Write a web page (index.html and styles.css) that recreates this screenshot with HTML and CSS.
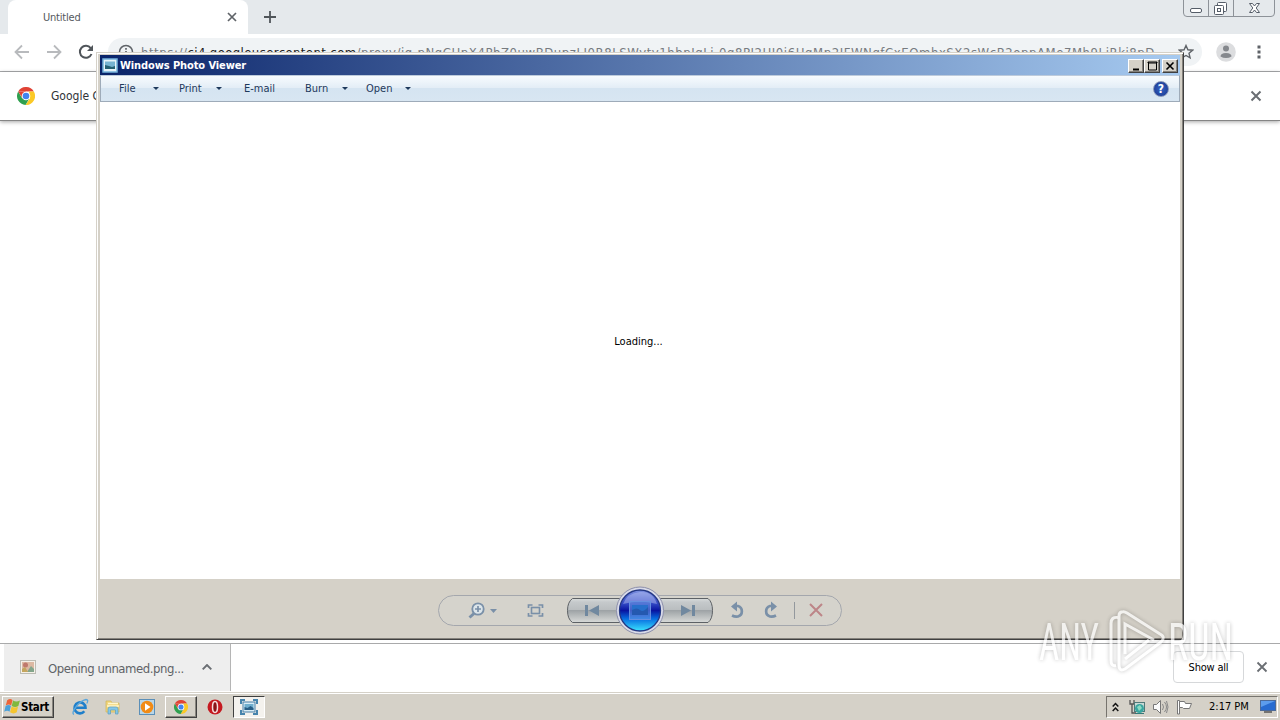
FILE: index.html
```html
<!DOCTYPE html>
<html lang="en">
<head>
    <meta charset="UTF-8">
    <title>Windows Photo Viewer</title>
    <link rel="stylesheet" href="styles.css">
</head>
<body>
<div class="desktop">

    <!-- browser -->
    <div class="browser">
        <div class="tabstrip">
            <div class="tab">
                <span class="tab-title">Untitled</span>
                <svg class="tab-close" width="10" height="10" viewBox="0 0 10 10"><path d="M1 1l8 8M9 1L1 9" stroke="#5f6368" stroke-width="1.7"/></svg>
            </div>
            <svg class="new-tab" width="14" height="14" viewBox="0 0 14 14"><path d="M7 1v12M1 7h12" stroke="#50555a" stroke-width="1.8"/></svg>
            <svg class="win-controls" width="94" height="18" viewBox="0 0 94 18">
                <path d="M.5 0v13q0 3.500 3.500 3.500h84q3.500 0 3.500-3.500V0M25.500 0v16M50.500 0v16" fill="none" stroke="#8d9298"/>
                <rect x="7.500" y="8.500" width="11" height="4" rx="1.500" fill="#fff" stroke="#555d68"/>
                <rect x="34.500" y="2.500" width="9" height="9" rx="1" fill="#fff" stroke="#555d68"/>
                <rect x="31.500" y="5.500" width="9" height="9" rx="1" fill="#fff" stroke="#555d68"/>
                <rect x="34.500" y="8.500" width="3" height="3" fill="#fff" stroke="#555d68"/>
                <path d="M66.500 3.500h3l2 2.500 2-2.500h3l-3.300 4.500 3.300 4.500h-3l-2-2.500-2 2.500h-3L69.800 8z" fill="#fff" stroke="#555d68"/>
            </svg>
        </div>
        <div class="toolbar">
            <svg class="nav-icon" width="16" height="16" viewBox="0 0 16 16"><path d="M15 8H2M8 1.500L1.500 8 8 14.500" fill="none" stroke="#b8babd" stroke-width="1.800"/></svg>
            <svg class="nav-icon" width="16" height="16" viewBox="0 0 16 16"><path d="M1 8h13M8 1.500L14.500 8 8 14.500" fill="none" stroke="#b8babd" stroke-width="1.800"/></svg>
            <svg class="nav-icon" width="16" height="16" viewBox="0 0 16 16"><path d="M13.500 10A6 6 0 1 1 12.700 4.200" fill="none" stroke="#50555a" stroke-width="2"/><path d="M15 1v6H9z" fill="#50555a"/></svg>
            <div class="omnibox">
                <svg class="info" width="16" height="16" viewBox="0 0 16 16"><circle cx="8" cy="8" r="6.500" fill="none" stroke="#5f6368" stroke-width="1.500"/><path d="M8 7v5M8 4v1.800" stroke="#5f6368" stroke-width="1.700"/></svg>
                <span class="url">https://<b>ci4.googleusercontent.com</b>/proxy/jq-pNgCHpX4PbZ0uwBDupzLJ0R8LSWytv1hbpIgLj-0g8PI2HJ0j6HgMp2IFWNgfCxEOmhxSX2sWcB2oppAMe7Mh9LjRkj8pD</span>
                <svg class="star" width="16" height="16" viewBox="0 0 16 16"><path d="M8 1.500l1.900 4.300 4.700.4-3.600 3.100 1.100 4.600L8 11.500l-4.100 2.400L5 9.300 1.400 6.200l4.700-.4z" fill="none" stroke="#5f6368" stroke-width="1.400"/></svg>
            </div>
            <svg class="avatar" width="20" height="20" viewBox="0 0 20 20"><circle cx="10" cy="10" r="9.800" fill="#dcdddf"/><circle cx="10" cy="6.500" r="3" fill="#85888d"/><path d="M4.500 14.500q0-3.500 5.500-3.500t5.500 3.500Q13 16 10 16t-5.500-1.500z" fill="#85888d"/></svg>
            <svg width="4" height="16" viewBox="0 0 4 16"><path d="M.5 1.500h3v3h-3zM.5 6.500h3v3h-3zM.5 11.500h3v3h-3z" fill="#5f6368"/></svg>
        </div>
        <div class="infobar">
            <svg width="18" height="18" viewBox="0 0 18 18">
                <path d="M1.200 4.500A9 9 0 0 1 16.800 4.500H9z" fill="#e04335"/>
                <path d="M16.800 4.500A9 9 0 0 1 8.500 18L13 11.200 12 4.500z" fill="#fbc926"/>
                <path d="M1.200 4.500A9 9 0 0 0 8.500 18L12 12 5 11z" fill="#2fa04f"/>
                <path d="M1.200 4.500L5.500 11.500 9 4.500z" fill="#e04335"/>
                <circle cx="9" cy="9" r="4.300" fill="#fff"/><circle cx="9" cy="9" r="3.300" fill="#4284f0"/>
            </svg>
            <span class="infobar-text">Google C</span>
            <svg class="infobar-close" width="12" height="12" viewBox="0 0 12 12"><path d="M1.500 1.500l9 9M10.500 1.500l-9 9" stroke="#6a6e73" stroke-width="2"/></svg>
        </div>
        <div class="page"></div>
        <div class="shelf">
            <div class="download">
                <svg width="16" height="14" viewBox="0 0 16 14"><rect x=".5" y=".5" width="15" height="13" fill="#f5f0e8" stroke="#bcbcb4"/><rect x="2" y="2" width="12" height="10" fill="#dcb8a2"/><circle cx="5.500" cy="5" r="2.500" fill="#c0796c"/><path d="M7 12l4-6 3 3v3z" fill="#83a58b"/><path d="M2 9l3-2 3 5H2z" fill="#c4a65e"/></svg>
                <span class="file-name">Opening unnamed.png...</span>
                <svg width="10" height="6" viewBox="0 0 10 6"><path d="M.7 5.300L5 1l4.300 4.300" fill="none" stroke="#6a6e73" stroke-width="1.900"/></svg>
            </div>
            <div class="show-all"><span>Show all</span></div>
            <svg width="12" height="12" viewBox="0 0 12 12"><path d="M1.500 1.500l9 9M10.500 1.500l-9 9" stroke="#6a6e73" stroke-width="1.800"/></svg>
        </div>
    </div>

    <!-- taskbar -->
    <div class="taskbar">
        <div class="start">
            <svg width="17" height="17" viewBox="0 0 16 16"><path d="M3 2q3-2 5 0L6.700 7q-2-2-5 0z" fill="#ec6437"/><path d="M8.500 2.300q3 2 6.500 0L13.500 7.500q-3 2-6.200 0z" fill="#80b83e"/><path d="M1.500 7.500q3-2 5 0L5.200 13q-2-2-5 0z" fill="#4aa1d9"/><path d="M7.200 8q3 2 6 0L12 13.500q-3 2-6.300 0z" fill="#f5c52f"/></svg>
            <span>Start</span>
        </div>
        <div class="task task-ie">
            <svg width="18" height="18" viewBox="0 0 18 18"><path d="M5 9.800h9.500A5.500 5.500 0 1 0 13.300 13.300" fill="none" stroke="#1f7fca" stroke-width="2.600"/><path d="M3 16.500C-1 15 8 3 15 1.500q3 0 .8 4" fill="none" stroke="#5aa6dc" stroke-width="1.300"/></svg>
        </div>
        <div class="task">
            <svg width="18" height="18" viewBox="0 0 18 18"><path d="M2 3h5l1 2h7v9H2z" fill="#f2d67b" stroke="#d0b75f" stroke-width=".8"/><path d="M4 5.500h10M3 8h12" stroke="#fff6cc" stroke-width="1.500"/><path d="M4 16v-5q0-2 2-2h6q2 0 2 2v5h-2.500v-4h-5v4z" fill="#84c7e8" stroke="#5b9dbe" stroke-width=".7"/></svg>
        </div>
        <div class="task">
            <svg width="16" height="16" viewBox="0 0 16 16"><rect x=".5" y=".5" width="15" height="15" fill="#b9d6e8" stroke="#5b8fb8"/><circle cx="8" cy="8" r="6.300" fill="#f18b16"/><path d="M6 4.300l5.500 3.700L6 11.700z" fill="#fff"/></svg>
        </div>
        <div class="task raised">
            <svg width="14" height="14" viewBox="0 0 18 18">
                <path d="M1.200 4.500A9 9 0 0 1 16.800 4.500H9z" fill="#e04335"/>
                <path d="M16.800 4.500A9 9 0 0 1 8.500 18L13 11.200 12 4.500z" fill="#fbc926"/>
                <path d="M1.200 4.500A9 9 0 0 0 8.500 18L12 12 5 11z" fill="#2fa04f"/>
                <path d="M1.200 4.500L5.500 11.500 9 4.500z" fill="#e04335"/>
                <circle cx="9" cy="9" r="4.300" fill="#fff"/><circle cx="9" cy="9" r="3.300" fill="#4284f0"/>
            </svg>
        </div>
        <div class="task">
            <svg width="16" height="16" viewBox="0 0 16 16"><circle cx="8" cy="8" r="7.500" fill="#c51920"/><ellipse cx="8" cy="8" rx="2.500" ry="5.500" fill="#8b1217" stroke="#f5dede" stroke-width="1.500"/></svg>
        </div>
        <div class="task pressed">
            <svg width="18" height="16" viewBox="0 0 18 16"><path d="M1 5V1h4M13 1h4v4M17 11v4h-4M5 15H1v-4" fill="none" stroke="#4784ad" stroke-width="2"/><rect x="3" y="3" width="12" height="10" fill="#d8ecf6" stroke="#4b7fa5"/><path d="M4.500 5h9v6h-9z" fill="#70aece"/><path d="M4.500 11V8l3 1 3-2 3 2v2z" fill="#285e86"/></svg>
        </div>
        <div class="tray">
            <svg class="chevrons" width="7" height="10" viewBox="0 0 7 10"><path d="M.7 4.500l2.800-3 2.800 3M.7 9l2.800-3L6.300 9" fill="none" stroke="#111" stroke-width="1.500"/></svg>
            <svg class="net" width="16" height="16" viewBox="0 0 16 16"><path d="M1 1v4h4V1M3 5v9h4" fill="none" stroke="#555" stroke-width="1.300"/><rect x="5.500" y="3.500" width="10" height="9" fill="#c8d9d5" stroke="#517979"/><circle cx="10.500" cy="9.500" r="4.500" fill="#39a6a0"/><path d="M8 8l3-2 2 3-3 3z" fill="#8ddbc3"/><path d="M6 14.500h9" stroke="#367878"/></svg>
            <svg class="volume" width="17" height="16" viewBox="0 0 17 16"><path d="M1.500 5.500h3l4-4v13l-4-4h-3z" fill="#fafafa" stroke="#777"/><path d="M10.500 5q2 3 0 6M12.500 3q4 5 0 10M14.500 2q3 6 0 12" fill="none" stroke="#888"/></svg>
            <svg class="flag" width="17" height="16" viewBox="0 0 17 16"><path d="M1.500 15V1.500h2V15z" fill="#fff" stroke="#777"/><path d="M3.500 2.500h5l1 2h6l-2 5h-6l-1-1h-3z" fill="#fff" stroke="#777"/></svg>
            <span class="clock">2:17 PM</span>
            <svg width="16" height="13" viewBox="0 0 16 13"><rect x=".5" y=".5" width="15" height="10" fill="#286bd0" stroke="#4c6a99"/><path d="M1 1h14L1 7z" fill="#5c9ced"/><path d="M4 12h8" stroke="#555" stroke-width="1.500"/></svg>
        </div>
    </div>

    <!-- photo viewer window -->
    <div class="viewer">
        <div class="titlebar">
            <svg width="16" height="15" viewBox="0 0 16 15"><rect x="1" y="1" width="14" height="13" fill="#e7f3fa" stroke="#75b4dd" stroke-width="1.500"/><rect x="3" y="3.500" width="10" height="7.500" fill="#77b3d2"/><path d="M3 11V7l4 1 3 1 3-1v3z" fill="#245f72"/></svg>
            <span class="title">Windows Photo Viewer</span>
            <div class="caption-btn"><svg width="12" height="10" viewBox="0 0 12 10"><path d="M3 8.500h6" stroke="#000" stroke-width="2"/></svg></div>
            <div class="caption-btn"><svg width="12" height="10" viewBox="0 0 12 10"><path d="M2.500 1v8h8V1M2 1h9v1H2z" fill="none" stroke="#000"/></svg></div>
            <div class="caption-btn close"><svg width="12" height="10" viewBox="0 0 12 10"><path d="M2.500 1.500l7 7M9.500 1.500l-7 7" stroke="#000" stroke-width="1.600"/></svg></div>
        </div>
        <div class="menubar">
            <div class="menu file"><span>File</span><i></i></div>
            <div class="menu print"><span>Print</span><i></i></div>
            <div class="menu email"><span>E-mail</span></div>
            <div class="menu burn"><span>Burn</span><i></i></div>
            <div class="menu open"><span>Open</span><i></i></div>
            <div class="help">?</div>
        </div>
        <div class="canvas"><span>Loading...</span></div>
        <div class="controls">
            <svg width="406" height="50" viewBox="437 586 406 50">
                <defs>
                    <linearGradient id="btn" x2="0" y2="1"><stop offset="0" stop-color="#d9dcdc"/><stop offset=".15" stop-color="#c5c9cb"/><stop offset=".48" stop-color="#b9bdbf"/><stop offset=".5" stop-color="#9ea3a6"/><stop offset="1" stop-color="#d8dad8"/></linearGradient>
                    <linearGradient id="ball" x2="0" y2="1"><stop offset="0" stop-color="#7e91e0"/><stop offset=".35" stop-color="#2c42c0"/><stop offset=".5" stop-color="#0814a0"/><stop offset=".7" stop-color="#076de0"/><stop offset="1" stop-color="#3be4ff"/></linearGradient>
                </defs>
                <rect x="438.500" y="595.500" width="403" height="30" rx="15" fill="#d5d3cc" stroke="#a4a7ad"/>
                <path d="M572.500 598.500H620V622.500H572.500Q567.500 619 567.500 610.500T572.500 598.500z" fill="url(#btn)" stroke="#5d6165"/>
                <path d="M660 598.500H708Q712.500 602 712.500 610.500T708 622.500H660z" fill="url(#btn)" stroke="#5d6165"/>
                <circle cx="640" cy="610.500" r="23.500" fill="#d8dae8" stroke="#8c8faa"/>
                <circle cx="640" cy="610.500" r="20.500" fill="url(#ball)" stroke="#233783" stroke-width="1.300"/>
                <path d="M623 604Q627 593 640 592T657 604Q640 599 623 604z" fill="#c8d2fa" opacity=".4"/>
                <rect x="629.500" y="601.500" width="21" height="18" fill="#6f9ce6" fill-opacity=".55" stroke="#668fe0"/>
                <path d="M632 605h16v10h-16z" fill="#276fcb"/><path d="M632 610q5-3 8 0t8-3v8h-16z" fill="#2459b0"/>
                <g fill="none" stroke="#7a90a8">
                    <circle cx="478" cy="609" r="5.700" fill="#dce5ea" stroke-width="1.800"/>
                    <path d="M475 609h6M478 606v6" stroke-width="1.700"/><path d="M474 613.500l-4.500 4" stroke-width="3"/>
                    <path d="M528.500 608v-3h4M538.500 605h4v3M542.500 613v3h-4M532.500 616h-4v-3" stroke-width="1.700"/>
                    <rect x="531.500" y="607.500" width="8" height="6" stroke-width="1.600"/>
                    <path d="M732 615.500Q735 617 738 616.500A5.500 5.500 0 0 0 738 606h-4" stroke-width="2.700"/>
                    <path d="M776 615.500Q773 617 770 616.500A5.500 5.500 0 0 1 770 606h4" stroke-width="2.700"/>
                </g>
                <path d="M490 609h7l-3.500 4z" fill="#7a90a8"/>
                <path d="M585 605h3v11h-3zM599 605v11l-10-5.500z" fill="#70889f"/>
                <path d="M692 605h3v11h-3zM681 605v11l10-5.500z" fill="#70889f"/>
                <path d="M731 606.500l6-5v10zM777 606.500l-6-5v10z" fill="#7a90a8"/>
                <path d="M794.500 602v17" stroke="#93989d"/>
                <path d="M810 604l12 12M822 604l-12 12" stroke="#bd8588" stroke-width="2"/>
            </svg>
        </div>
    </div>

    <svg class="watermark" width="204" height="70" viewBox="1034 606 204 70">
        <g class="mark">
            <text x="1039" y="660" textLength="60" lengthAdjust="spacingAndGlyphs">ANY</text>
            <text x="1168" y="660" textLength="65" lengthAdjust="spacingAndGlyphs">RUN</text>
            <path d="M1118 617.500q-7-1-7 6v37q0 6 5 5M1122 612q-3 0-3 4v49q0 7 6 4l36-27q5-5-1-8l-33-21q-3-2-5-1zM1125 654v-30l29 16M1125 659l24-19"/>
        </g>
    </svg>
</div>
</body>
</html>
```
FILE: styles.css
```css
body {
    margin: 0;
    overflow: hidden;
    font-family: "DejaVu Sans Condensed", "DejaVu Sans", sans-serif;
    font-stretch: condensed;
    font-size: 11px;
    color: #000;
}

svg {
    display: block;
    flex: none;
}

span {
    white-space: nowrap;
}

.desktop {
    position: relative;
    display: flex;
    flex-direction: column;
    width: 1280px;
    height: 720px;
    overflow: hidden;
}

/* browser */

.browser {
    flex: 1;
    display: flex;
    flex-direction: column;
    background: #fff;
}

.tabstrip {
    display: flex;
    align-items: center;
    height: 34px;
    background: #e5e9ec;
    padding-left: 8px;
}

.tab {
    display: flex;
    align-items: center;
    justify-content: space-between;
    box-sizing: border-box;
    width: 240px;
    height: 34px;
    padding: 0 11px 0 35px;
    border-radius: 8px 8px 0 0;
    background: #fff;
}

.tab-title {
    color: #54585d;
    letter-spacing: -0.2px;
}

.new-tab {
    margin-left: 15px;
}

.win-controls {
    margin: 0 3px 0 auto;
    align-self: flex-start;
}

.toolbar {
    display: flex;
    align-items: center;
    box-sizing: border-box;
    height: 38px;
    padding: 0 19px 1px 14px;
    border-bottom: 1px solid #aaacae;
}

.nav-icon {
    margin-right: 16px;
}

.omnibox {
    display: flex;
    align-items: center;
    box-sizing: border-box;
    width: 1094px;
    height: 28px;
    margin-left: -2px;
    padding: 0 8px 0 10px;
    border-radius: 14px;
    background: #f0f3f5;
}

.url {
    margin-left: 7px;
    width: 1014px;
    font-size: 13px;
    letter-spacing: 0.56px;
    color: #777b80;
    overflow: hidden;
}

.url b {
    font-weight: normal;
    letter-spacing: 0.4px;
    color: #222;
}

.star {
    margin-left: auto;
}

.avatar {
    margin: 0 auto 0 14px;
}

.infobar {
    display: flex;
    align-items: center;
    height: 48px;
    padding: 0 18px 0 17px;
    border-bottom: 1px solid #858585;
    box-shadow: 0 1px 4px rgba(0, 0, 0, 0.35);
}

.infobar-text {
    margin-left: 16px;
    font-size: 12px;
    color: #303438;
}

.infobar-close {
    margin-left: auto;
}

.page {
    flex: 1;
}

.shelf {
    display: flex;
    align-items: center;
    box-sizing: border-box;
    height: 49px;
    padding: 0 12px 2px 4px;
    border-top: 1px solid #a9aaab;
}

.download {
    display: flex;
    align-items: center;
    box-sizing: border-box;
    width: 227px;
    height: 47px;
    padding: 0 18px 0 16px;
    border-right: 1px solid #b5b5b5;
    background: #eee;
}

.file-name {
    flex: 1;
    margin-left: 12px;
    padding-top: 3px;
    font-size: 13px;
    letter-spacing: -0.45px;
    color: #606367;
}

.show-all {
    display: flex;
    align-items: center;
    justify-content: center;
    box-sizing: border-box;
    width: 71px;
    height: 32px;
    margin: 0 12px 0 auto;
    border: 1px solid #d6d8da;
    border-radius: 4px;
    letter-spacing: -0.2px;
}

/* taskbar */

.taskbar {
    display: flex;
    align-items: center;
    box-sizing: border-box;
    height: 28px;
    padding: 0 2px;
    border-top: 1px solid #d5d1c8;
    box-shadow: inset 0 1px #fff;
    background: #d5d1c8;
}

.start {
    display: flex;
    align-items: center;
    box-sizing: border-box;
    width: 52px;
    height: 22px;
    padding-left: 1px;
    border: 1px solid;
    border-color: #fff #404040 #404040 #fff;
    box-shadow: inset -1px -1px #89867f;
    font-size: 11.5px;
    font-weight: bold;
    margin-right: 10px;
}

.start span {
    letter-spacing: -0.3px;
}

.task {
    display: flex;
    align-items: center;
    justify-content: center;
    box-sizing: border-box;
    width: 32px;
    height: 22px;
    margin-right: 2px;
}

.task-ie {
    margin-right: 1px;
}

.raised {
    border: 1px solid;
    border-color: #fff #404040 #404040 #fff;
    box-shadow: inset -1px -1px #89867f;
}

.pressed {
    border: 1px solid;
    border-color: #404040 #fff #fff #404040;
    background: #f4f2ee;
}

.tray {
    display: flex;
    align-items: center;
    box-sizing: border-box;
    width: 172px;
    height: 22px;
    margin-left: auto;
    padding: 0 1px 0 5px;
    border: 1px solid;
    border-color: #77746e #fff #fff #77746e;
}

.net {
    margin-left: 10px;
}

.volume {
    margin-left: 7px;
}

.flag {
    margin-left: 7px;
}

.clock {
    margin: 0 auto 0 16px;
}

/* photo viewer */

.viewer {
    position: absolute;
    left: 96px;
    top: 52px;
    display: flex;
    flex-direction: column;
    box-sizing: border-box;
    width: 1088px;
    height: 588px;
    padding: 2px;
    border: 1px solid;
    border-color: #d5d1c8 #404040 #404040 #d5d1c8;
    box-shadow: inset 1px 1px #fff, inset -1px -1px #85827c;
    background: #d5d1c8;
}

.titlebar {
    display: flex;
    align-items: center;
    box-sizing: border-box;
    height: 20px;
    margin: 0 1px;
    padding: 1px 2px 0;
    background: linear-gradient(to right, #0a246a, #a6caf0);
    color: #fff;
    font-weight: bold;
}

.title {
    margin: 0 auto 0 2px;
    letter-spacing: -0.1px;
}

.caption-btn {
    box-sizing: border-box;
    width: 16px;
    height: 14px;
    padding: 1px;
    border: 1px solid;
    border-color: #fff #404040 #404040 #fff;
    box-shadow: inset -1px -1px #85827c;
    background: #d5d1c8;
}

.close {
    margin-left: 2px;
}

.menubar {
    display: flex;
    align-items: center;
    box-sizing: border-box;
    height: 27px;
    margin: 0 1px;
    padding: 0 10px 0 18px;
    border: 1px solid;
    border-color: #bdcbdc #9eabb9 #9eabb9;
    background: linear-gradient(#f7fbfe, #e3edf6 48%, #d5e4f1 50%, #d8e6f2);
    color: #1e395b;
}

.menu {
    display: flex;
    align-items: center;
    justify-content: space-between;
}

.menu i {
    border: 3px solid transparent;
    border-top-color: #1e395b;
    border-bottom: 0;
}

.file {
    width: 40px;
    margin-right: 20px;
}

.print {
    width: 43px;
    margin-right: 22px;
}

.email {
    width: 61px;
}

.burn {
    width: 43px;
    margin-right: 18px;
}

.open {
    width: 45px;
}

.help {
    box-sizing: border-box;
    width: 16px;
    height: 16px;
    margin-left: auto;
    border: 1px solid #8795b8;
    border-radius: 50%;
    background: radial-gradient(#3564c4, #17348c);
    color: #fff;
    font-size: 12px;
    font-weight: bold;
    line-height: 14px;
    text-align: center;
}

.canvas {
    flex: 1;
    display: flex;
    align-items: center;
    justify-content: center;
    margin: 0 1px;
    padding: 2px 3px 0 0;
    background: #fff;
}

.controls {
    display: flex;
    align-items: center;
    justify-content: center;
    box-sizing: border-box;
    height: 58px;
    padding-top: 6px;
}

/* watermark */

.watermark {
    position: absolute;
    left: 1034px;
    top: 606px;
    filter: drop-shadow(0 0 2px rgba(0, 0, 0, 0.35));
    opacity: 0.7;
    pointer-events: none;
}

.mark {
    fill: #fff;
}

.mark path {
    fill: none;
    stroke: #fff;
    stroke-width: 3;
}

.mark text {
    font-family: Roboto, sans-serif;
    font-size: 52px;
    font-weight: 400;
}
```
